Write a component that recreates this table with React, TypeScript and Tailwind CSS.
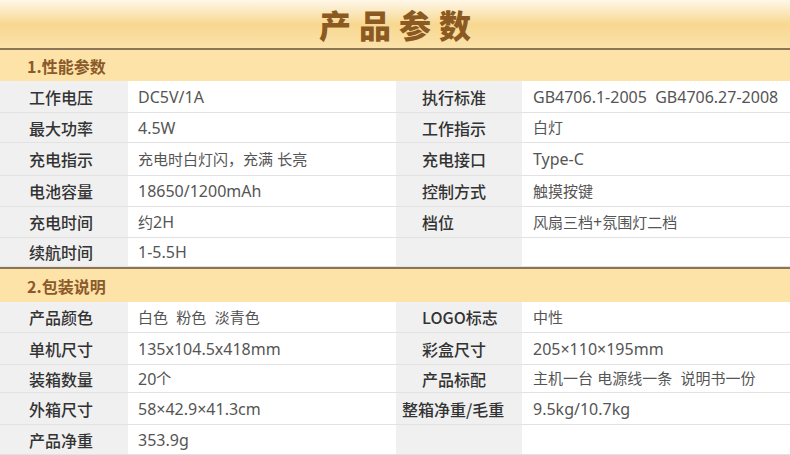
import React from 'react';

interface SpecRow {
  h: string;
  l1: string;
  v1: string;
  l2?: string;
  v2?: string;
  wide?: boolean;
}

const perf: SpecRow[] = [
  { h: 'h-[32px]', l1: '工作电压', v1: 'DC5V/1A', l2: '执行标准', v2: 'GB4706.1-2005  GB4706.27-2008' },
  { h: 'h-[30px]', l1: '最大功率', v1: '4.5W', l2: '工作指示', v2: '白灯' },
  { h: 'h-[33px]', l1: '充电指示', v1: '充电时白灯闪，充满 长亮', l2: '充电接口', v2: 'Type-C' },
  { h: 'h-[31px]', l1: '电池容量', v1: '18650/1200mAh', l2: '控制方式', v2: '触摸按键' },
  { h: 'h-[31px]', l1: '充电时间', v1: '约2H', l2: '档位', v2: '风扇三档+氛围灯二档' },
  { h: 'h-[29px]', l1: '续航时间', v1: '1-5.5H' }
];

const pack: SpecRow[] = [
  { h: 'h-[31px]', l1: '产品颜色', v1: '白色  粉色  淡青色', l2: 'LOGO标志', v2: '中性' },
  { h: 'h-[32px]', l1: '单机尺寸', v1: '135x104.5x418mm', l2: '彩盒尺寸', v2: '205×110×195mm' },
  { h: 'h-[28px]', l1: '装箱数量', v1: '20个', l2: '产品标配', v2: '主机一台 电源线一条  说明书一份' },
  { h: 'h-[32px]', l1: '外箱尺寸', v1: '58×42.9×41.3cm', l2: '整箱净重/毛重', v2: '9.5kg/10.7kg', wide: true },
  { h: 'h-[30px]', l1: '产品净重', v1: '353.9g' }
];

// latin runs come out a bit larger than the chinese ones in the original
const Value: React.FC<{ text?: string }> = ({ text }) => {
  if (!text) return null;
  const parts = text.match(/[\x20-\x7E×]+|[^\x20-\x7E×]+/g) || [];
  return (
    <>
      {parts.map((p, i) =>
        /^[\x20-\x7E×]+$/.test(p) ? (
          <span key={i} className="text-[16px]" style={{ fontFamily: '"Noto Sans", sans-serif' }}>
            {p}
          </span>
        ) : (
          <span key={i} className="text-[15px]">
            {p}
          </span>
        )
      )}
    </>
  );
};

const Row: React.FC<{ row: SpecRow }> = ({ row }) => (
  <div className={`grid grid-cols-[128px_268px_126px_1fr] border-b border-[#e2e2e2] ${row.h}`}>
    <div className="flex items-center bg-[#f0f0f0] pl-[29px] text-[16px] font-medium text-[#333]">{row.l1}</div>
    <div className="flex items-center bg-white pl-[10px] text-[#555] whitespace-pre">
      <Value text={row.v1} />
    </div>
    <div
      className={`flex items-center bg-[#f0f0f0] text-[16px] font-medium text-[#333] whitespace-nowrap ${
        row.wide ? 'pl-[6px]' : 'pl-[26px]'
      }`}
    >
      {row.l2}
    </div>
    <div className="flex items-center bg-white pl-[11px] text-[#555] whitespace-pre">
      <Value text={row.v2} />
    </div>
  </div>
);

const SectionHeader: React.FC<{ title: string; h: string }> = ({ title, h }) => (
  <div className={`flex items-center bg-[#fde3a8] pl-[27px] text-[16px] font-bold text-[#8a5a2b] ${h}`}>
    {title}
  </div>
);

export default function App() {
  return (
    <div
      className="w-[790px] h-[455px] overflow-hidden bg-white"
      style={{ fontFamily: '"Noto Sans CJK SC", "Noto Sans", sans-serif' }}
    >
      {/* Title bar */}
      <div className="flex h-[48px] items-center justify-center bg-gradient-to-b from-[#fef7e8] via-[#f8d890] to-[#fbe2aa]">
        <h1 className="pl-[8px] text-[32px] font-black leading-none tracking-[8px] text-[#8b5a22]">产品参数</h1>
      </div>
      <div className="h-[2px] bg-[#8c7556]" />

      <SectionHeader title="1.性能参数" h="h-[31px]" />
      {perf.map((r) => (
        <Row key={r.l1} row={r} />
      ))}

      <div className="h-[2px] bg-[#8c7556]" />
      <SectionHeader title="2.包装说明" h="h-[33px]" />
      {pack.map((r) => (
        <Row key={r.l1} row={r} />
      ))}
    </div>
  );
}
